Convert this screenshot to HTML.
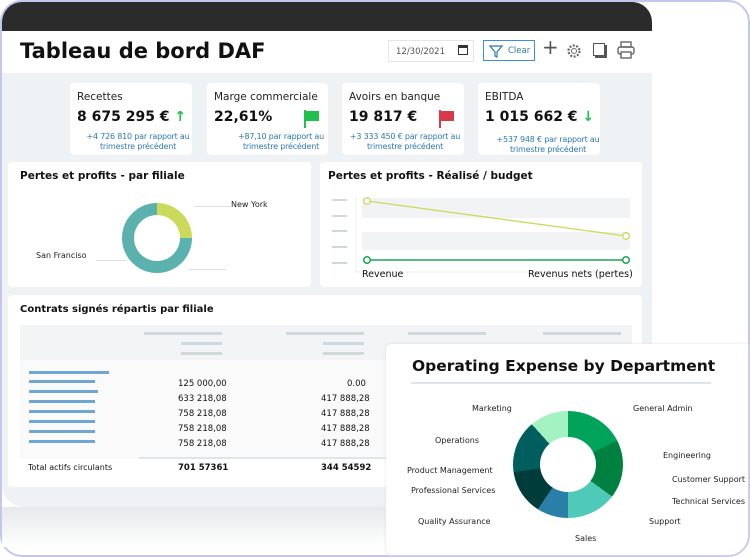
<!DOCTYPE html>
<html><head><meta charset="utf-8"><style>
*{margin:0;padding:0;box-sizing:border-box}
body{width:750px;height:557px;overflow:hidden;background:#fff;font-family:"DejaVu Sans","Liberation Sans",sans-serif;position:relative;color:#111}
.frame{position:absolute;left:0;top:0;width:750px;height:557px;border:2px solid #c4c6f2;border-radius:22px}
.dev{position:absolute;left:2px;top:2px;width:650px;height:505px;border-radius:20px 20px 0 22px;overflow:hidden;background:#eef2f4}
.top{position:absolute;left:0;top:0;width:650px;height:29px;background:#2b2b2b}
.hdr{position:absolute;left:0;top:29px;width:650px;height:42px;background:#fff}
.abs{position:absolute}
.card{position:absolute;background:#fff;border-radius:4px}
.kt{font-size:10.5px;color:#222;position:absolute;left:7px;top:8px}
.kv{font-size:14px;font-weight:bold;position:absolute;left:7px;top:26px}
.ks{font-size:8px;color:#2b78b7;position:absolute;text-align:center;line-height:10px;letter-spacing:-0.2px}
.pt{font-size:10.5px;font-weight:bold;position:absolute}
.lbl{font-size:8px;color:#222;position:absolute}
.bar{position:absolute;height:3px;background:#cfd8dd}
.bb{position:absolute;height:3px;background:#6fa6d3;left:26px}
.num{font-size:8.5px;position:absolute}
</style></head><body>
<div class="frame"></div>
<div class="dev">
 <div class="top"></div>
 <div class="hdr">
  <div class="abs" style="left:18px;top:8px;font-size:21px;font-weight:bold">Tableau de bord DAF</div>
  <div class="abs" style="left:386px;top:9px;width:86px;height:22px;border:1px solid #e2e6e8;font-size:8.5px;color:#555;padding:6px 0 0 7px">12/30/2021</div>
  <div class="abs" style="left:456px;top:14px;width:10px;height:10px;border:1px solid #333;border-top:3px solid #333"></div>
  <div class="abs" style="left:481px;top:9px;width:52px;height:21px;border:1px solid #3d8fd0;font-size:8.5px;color:#2b78b7;padding:5px 0 0 24px">Clear</div>
  <svg class="abs" style="left:487px;top:13px" width="14" height="14"><path d="M1 2h12l-5 6v5l-2-1V8z" fill="none" stroke="#2b78b7" stroke-width="1.2"/></svg>
  <div class="abs" style="left:540px;top:4px;font-size:20px;color:#555">+</div>
  <svg class="abs" style="left:563px;top:11px" width="18" height="18"><circle cx="9" cy="9" r="5.5" fill="none" stroke="#666" stroke-width="2.2" stroke-dasharray="2 1.5"/><circle cx="9" cy="9" r="2.5" fill="none" stroke="#666"/></svg>
  <div class="abs" style="left:591px;top:12px;width:12px;height:13px;border:1.5px solid #555;box-shadow:2px 2px 0 #555"></div>
  <svg class="abs" style="left:615px;top:10px" width="18" height="18"><rect x="4" y="1" width="10" height="5" fill="none" stroke="#666" stroke-width="1.4"/><rect x="1" y="6" width="16" height="7" rx="2" fill="none" stroke="#666" stroke-width="1.4"/><rect x="4" y="11" width="10" height="6" fill="#fff" stroke="#666" stroke-width="1.4"/></svg>
 </div>
 <div class="card" style="left:68px;top:81px;width:122px;height:72px"><div class="kt">Recettes</div><div class="kv">8 675 295 €<span style="color:#1fc04b"> ↑</span></div><div class="ks" style="left:10px;top:49px;width:116px">+4 726 810 par rapport au trimestre précédent</div></div>
 <div class="card" style="left:205px;top:81px;width:121px;height:72px"><div class="kt">Marge commerciale</div><div class="kv">22,61%</div><svg class="abs" style="left:96px;top:26px" width="18" height="20"><path d="M2 1v18" stroke="#1fc04b" stroke-width="2"/><path d="M3 2h13v10H3z" fill="#1fc04b"/></svg><div class="ks" style="left:18px;top:49px;width:112px">+87,10 par rapport au trimestre précédent</div></div>
 <div class="card" style="left:340px;top:81px;width:122px;height:72px"><div class="kt">Avoirs en banque</div><div class="kv">19 817 €</div><svg class="abs" style="left:96px;top:26px" width="18" height="20"><path d="M2 1v18" stroke="#d93a4a" stroke-width="2"/><path d="M3 2h13v10H3z" fill="#d93a4a"/></svg><div class="ks" style="left:2px;top:49px;width:122px">+3 333 450 € par rapport au trimestre précédent</div></div>
 <div class="card" style="left:476px;top:81px;width:122px;height:72px"><div class="kt">EBITDA</div><div class="kv">1 015 662 €<span style="color:#1fc04b"> ↓</span></div><div class="ks" style="left:8px;top:52px;width:124px">+537 948 € par rapport au trimestre précédent</div></div>

 <div class="card" style="left:6px;top:160px;width:303px;height:125px">
  <div class="pt" style="left:12px;top:8px">Pertes et profits - par filiale</div>
  <div class="abs" style="left:114px;top:41px;width:70px;height:70px;border-radius:50%;background:conic-gradient(#cbda5a 0 90deg,#5ab1ae 90deg 360deg)"></div>
  <div class="abs" style="left:126px;top:53px;width:46px;height:46px;border-radius:50%;background:#fff"></div>
  <div class="lbl" style="left:223px;top:38px">New York</div>
  <div class="lbl" style="left:28px;top:89px">San Franciso</div>
  <div class="abs" style="left:186px;top:44px;width:36px;height:1px;background:#dde"></div>
  <div class="abs" style="left:88px;top:98px;width:30px;height:1px;background:#dde"></div>
  <div class="abs" style="left:180px;top:107px;width:38px;height:1px;background:#dde"></div>
 </div>
 <div class="card" style="left:318px;top:160px;width:322px;height:125px">
  <div class="pt" style="left:8px;top:8px">Pertes et profits - Réalisé / budget</div>
  <div class="abs" style="left:42px;top:36px;width:268px;height:20px;background:#f2f3f4"></div>
  <div class="abs" style="left:42px;top:70px;width:268px;height:18px;background:#f2f3f4"></div>
  <div class="bar" style="left:12px;top:37px;width:15px;height:1.5px"></div><div class="bar" style="left:12px;top:53px;width:15px;height:1.5px"></div><div class="bar" style="left:12px;top:68px;width:15px;height:1.5px"></div><div class="bar" style="left:12px;top:84px;width:15px;height:1.5px"></div><div class="bar" style="left:12px;top:100px;width:15px;height:1.5px"></div>
  <svg class="abs" style="left:0;top:0" width="322" height="125"><path d="M36 35v75h276" fill="none" stroke="#eef0f1"/><line x1="47" y1="39" x2="306" y2="74" stroke="#cbda5a" stroke-width="1.3"/><line x1="47" y1="98" x2="306" y2="98" stroke="#1aa653" stroke-width="1.5"/><circle cx="47" cy="39" r="3.3" fill="#fff" stroke="#cbda5a" stroke-width="1.3"/><circle cx="306" cy="74" r="3.3" fill="#fff" stroke="#cbda5a" stroke-width="1.3"/><circle cx="47" cy="98" r="3.3" fill="#fff" stroke="#1aa653" stroke-width="1.5"/><circle cx="306" cy="98" r="3.3" fill="#fff" stroke="#1aa653" stroke-width="1.5"/></svg>
  <div class="abs" style="left:42px;top:107px;font-size:9.5px">Revenue</div>
  <div class="abs" style="left:208px;top:107px;font-size:9.5px">Revenus nets (pertes)</div>
 </div>
 <div class="card" style="left:6px;top:293px;width:634px;height:192px">
  <div class="pt" style="left:12px;top:9px;font-size:10px">Contrats signés répartis par filiale</div>
  <div class="abs" style="left:12px;top:30px;width:612px;height:35px;background:#f3f4f5"></div>
  <div class="abs" style="left:12px;top:65px;width:612px;height:99px;background:#fafafa"></div>
  <div class="abs" style="left:131px;top:162px;width:493px;height:2px;background:#dfe5e8"></div>
  <div class="bar" style="left:136px;top:37px;width:78px"></div><div class="bar" style="left:173px;top:47px;width:41px"></div><div class="bar" style="left:173px;top:57px;width:41px"></div>
  <div class="bar" style="left:278px;top:37px;width:78px"></div><div class="bar" style="left:315px;top:47px;width:41px"></div><div class="bar" style="left:315px;top:57px;width:41px"></div>
  <div class="bar" style="left:400px;top:37px;width:78px"></div><div class="bar" style="left:535px;top:37px;width:78px"></div>
  <div class="bb" style="left:21px;top:76px;width:80px"></div><div class="bb" style="left:21px;top:85px;width:66px"></div><div class="bb" style="left:21px;top:95px;width:69px"></div><div class="bb" style="left:21px;top:105px;width:66px"></div><div class="bb" style="left:21px;top:115px;width:66px"></div><div class="bb" style="left:21px;top:125px;width:66px"></div><div class="bb" style="left:21px;top:135px;width:66px"></div><div class="bb" style="left:21px;top:145px;width:66px"></div>
  <div class="num" style="left:170px;top:84px">125 000,00</div><div class="num" style="left:170px;top:99px">633 218,08</div><div class="num" style="left:170px;top:114px">758 218,08</div><div class="num" style="left:170px;top:129px">758 218,08</div><div class="num" style="left:170px;top:144px">758 218,08</div>
  <div class="num" style="left:339px;top:84px">0.00</div><div class="num" style="left:313px;top:99px">417 888,28</div><div class="num" style="left:313px;top:114px">417 888,28</div><div class="num" style="left:313px;top:129px">417 888,28</div><div class="num" style="left:313px;top:144px">417 888,28</div>
  <div class="num" style="left:20px;top:168px;font-size:8px">Total actifs circulants</div>
  <div class="num" style="left:170px;top:168px;font-weight:bold">701 57361</div><div class="num" style="left:313px;top:168px;font-weight:bold">344 54592</div>
 </div>
</div>
<div class="abs" style="left:2px;top:507px;width:650px;height:40px;background:linear-gradient(#e6e8ea,#fff)"></div>
<div class="abs" style="left:386px;top:344px;width:362px;height:211px;background:#fff;border-radius:6px 0 20px 6px;box-shadow:0 0 3px #dde"></div>
<div class="abs" style="left:412px;top:357px;font-size:15.5px;font-weight:bold">Operating Expense by Department</div>
<div class="abs" style="left:411px;top:382px;width:300px;height:2px;background:#dfe5e8"></div>
<div class="abs" style="left:513px;top:411px;width:110px;height:107px;border-radius:50%;background:conic-gradient(#00a35a 0 64deg,#00813f 64deg 126deg,#4fc9b8 126deg 180deg,#2a7fa8 180deg 214deg,#003c3a 214deg 262deg,#005f5e 262deg 318deg,#a4f1c1 318deg 360deg)"></div>
<div class="abs" style="left:540px;top:437px;width:56px;height:55px;border-radius:50%;background:#fff"></div>
<div class="lbl" style="left:472px;top:404px">Marketing</div>
<div class="lbl" style="left:633px;top:404px">General Admin</div>
<div class="lbl" style="left:435px;top:436px">Operations</div>
<div class="lbl" style="left:663px;top:451px">Engineering</div>
<div class="lbl" style="left:407px;top:466px">Product Management</div>
<div class="lbl" style="left:672px;top:475px">Customer Support</div>
<div class="lbl" style="left:411px;top:486px">Professional Services</div>
<div class="lbl" style="left:672px;top:497px">Technical Services</div>
<div class="lbl" style="left:418px;top:517px">Quality Assurance</div>
<div class="lbl" style="left:649px;top:517px">Support</div>
<div class="lbl" style="left:575px;top:534px">Sales</div>
</body></html>
